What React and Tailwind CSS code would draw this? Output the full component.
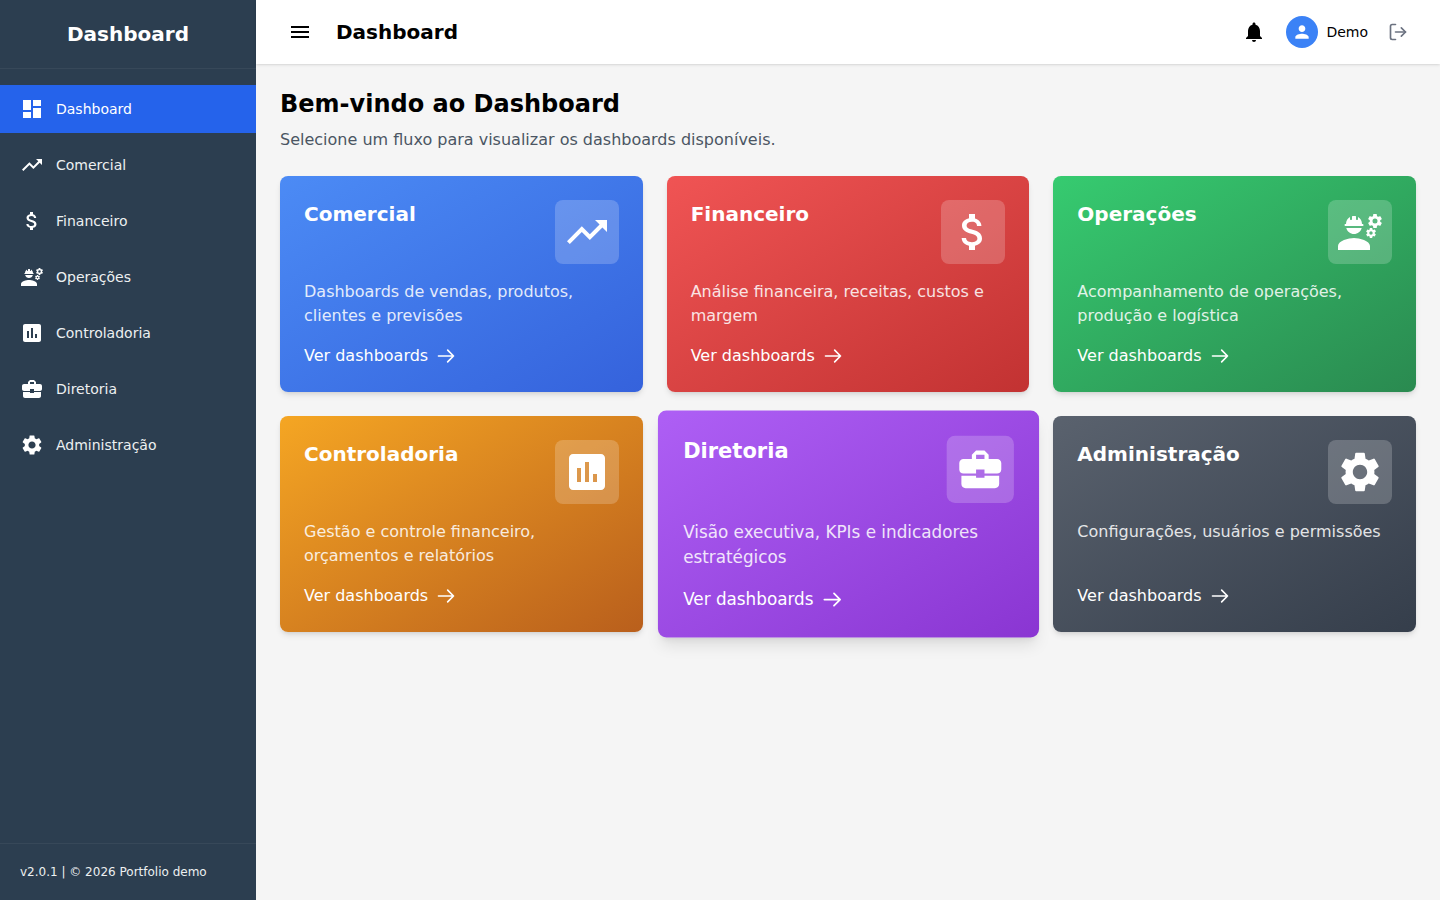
import React from "react";
import {
  MdDashboard, MdTrendingUp, MdAttachMoney, MdEngineering, MdAssessment, MdBusinessCenter, MdSettings,
  MdNotifications, MdPerson, MdMenu,
} from "react-icons/md";

const nav = [
  { label: "Dashboard", Icon: MdDashboard, active: true },
  { label: "Comercial", Icon: MdTrendingUp },
  { label: "Financeiro", Icon: MdAttachMoney },
  { label: "Operações", Icon: MdEngineering },
  { label: "Controladoria", Icon: MdAssessment },
  { label: "Diretoria", Icon: MdBusinessCenter },
  { label: "Administração", Icon: MdSettings },
];

const cards = [
  { title: "Comercial", desc: "Dashboards de vendas, produtos, clientes e previsões", Icon: MdTrendingUp, bg: "from-[#4c8bf5] to-[#3562dc]" },
  { title: "Financeiro", desc: "Análise financeira, receitas, custos e margem", Icon: MdAttachMoney, bg: "from-[#f05454] to-[#c23232]" },
  { title: "Operações", desc: "Acompanhamento de operações, produção e logística", Icon: MdEngineering, bg: "from-[#36cb70] to-[#2a8a50]" },
  { title: "Controladoria", desc: "Gestão e controle financeiro, orçamentos e relatórios", Icon: MdAssessment, bg: "from-[#f5a623] to-[#b95f1c]" },
  { title: "Diretoria", desc: "Visão executiva, KPIs e indicadores estratégicos", Icon: MdBusinessCenter, bg: "from-[#ae5ff5] to-[#8a35d2]", hover: true },
  { title: "Administração", desc: "Configurações, usuários e permissões", Icon: MdSettings, bg: "from-[#5a626e] to-[#353e4b]" },
];

function Arrow() {
  return (
    <svg className="w-5 h-5" viewBox="0 0 24 24" fill="none" stroke="currentColor" strokeWidth="2" strokeLinecap="round" strokeLinejoin="round">
      <path d="M14 5l7 7m0 0l-7 7m7-7H3" />
    </svg>
  );
}

function Logout() {
  return (
    <svg className="w-5 h-5" viewBox="0 0 24 24" fill="none" stroke="currentColor" strokeWidth="2" strokeLinecap="round" strokeLinejoin="round">
      <path d="M9 21H5a2 2 0 0 1-2-2V5a2 2 0 0 1 2-2h4" />
      <path d="M16 17l5-5-5-5" />
      <path d="M21 12H9" />
    </svg>
  );
}

function Card({ title, desc, Icon, bg, hover }) {
  return (
    <div className={`flex flex-col p-6 rounded-lg bg-linear-to-br text-white ${bg} ${hover ? "scale-105 shadow-lg z-10" : "shadow-md"}`}>
      <div className="flex items-start justify-between mb-4">
        <h2 className="text-xl font-bold">{title}</h2>
        <div className="w-16 h-16 rounded-lg bg-white/20 flex items-center justify-center">
          <Icon size={48} />
        </div>
      </div>
      <p className="flex-1 mb-4 text-base opacity-85">{desc}</p>
      <div className="flex items-center gap-2 text-base">
        <span>Ver dashboards</span>
        <Arrow />
      </div>
    </div>
  );
}

export default function App() {
  return (
    <div className="flex h-screen overflow-hidden bg-[#f5f5f5]" style={{ fontFamily: '"DejaVu Sans", sans-serif' }}>
      <aside className="w-64 shrink-0 flex flex-col bg-[#2c3e50] text-[#ecf0f1]">
        <div className="h-[69px] shrink-0 flex items-center justify-center border-b border-white/5">
          <span className="text-xl font-bold text-white">Dashboard</span>
        </div>
        <nav className="flex-1 py-4 flex flex-col gap-2">
          {nav.map(({ label, Icon, active }) => (
            <div key={label} className={`h-12 flex items-center gap-3 px-5 text-sm ${active ? "bg-[#2563eb] text-white" : ""}`}>
              <Icon size={24} className="text-white" />
              <span>{label}</span>
            </div>
          ))}
        </nav>
        <div className="px-5 py-5 border-t border-white/5 text-xs leading-4">v2.0.1 | © 2026 Portfolio demo</div>
      </aside>

      <div className="flex-1 min-w-0 flex flex-col">
        <header className="h-16 shrink-0 bg-white shadow-sm flex items-center justify-between px-6">
          <div className="flex items-center gap-4">
            <button className="p-2 text-black"><MdMenu size={24} /></button>
            <h1 className="text-xl font-bold text-black">Dashboard</h1>
          </div>
          <div className="flex items-center">
            <MdNotifications size={24} className="text-black mr-5" />
            <div className="w-8 h-8 rounded-full bg-[#3b82f6] flex items-center justify-center text-white mr-2">
              <MdPerson size={20} />
            </div>
            <span className="text-sm text-black mr-3">Demo</span>
            <button className="p-2 text-[#6b7280]"><Logout /></button>
          </div>
        </header>

        <main className="flex-1 p-6">
          <h1 className="text-2xl font-bold text-black mb-2">Bem-vindo ao Dashboard</h1>
          <p className="text-base text-[#4b5563] mb-6">Selecione um fluxo para visualizar os dashboards disponíveis.</p>
          <div className="grid grid-cols-3 gap-6">
            {cards.map((c) => <Card key={c.title} {...c} />)}
          </div>
        </main>
      </div>
    </div>
  );
}
